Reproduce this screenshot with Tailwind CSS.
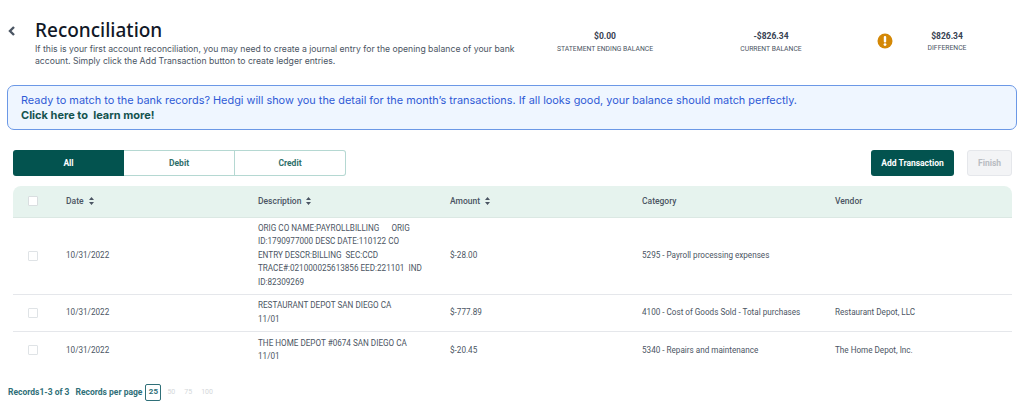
<!DOCTYPE html>
<html lang="en">
<head>
  <meta charset="UTF-8">
  <title>Reconciliation</title>
  <script src="https://cdn.jsdelivr.net/npm/@tailwindcss/browser@4"></script>
</head>
<body class="bg-white h-[404px] w-[1024px] overflow-hidden font-['Roboto',sans-serif] text-[#4b5563]">
  <!-- header -->
  <div class="flex h-[85px] pt-[19px]">
    <div class="w-[35px] pl-[8px] pt-[7px]">
      <svg width="8" height="10" viewBox="0 0 8 10"><path d="M6 1 L2 5 L6 9" fill="none" stroke="#4b5563" stroke-width="2.4"/></svg>
    </div>
    <div class="w-[495px]">
      <h1 class="text-[19px] leading-[22px] font-medium text-[#111827] font-['Noto_Sans',sans-serif]">Reconciliation</h1>
      <p class="mt-[3px] text-[8.66px] leading-[11.5px] text-[#4b5563] font-['Inter',sans-serif]">If this is your first account reconciliation, you may need to create a journal entry for the opening balance of your bank account. Simply click the Add Transaction button to create ledger entries.</p>
    </div>
    <div class="w-[130px] ml-[10px] pt-[11px] text-center">
      <div class="text-[8.5px] leading-[12px] font-bold text-[#374151]">$0.00</div>
      <div class="mt-[1px] text-[6.8px] leading-[12px] text-[#4b5563]">STATEMENT ENDING BALANCE</div>
    </div>
    <div class="w-[120px] ml-[41px] pt-[11px] text-center">
      <div class="text-[8.5px] leading-[12px] font-bold text-[#374151]">-$826.34</div>
      <div class="mt-[1px] text-[6.8px] leading-[12px] text-[#4b5563]">CURRENT BALANCE</div>
    </div>
    <div class="ml-[46px] pt-[14px]">
      <svg width="16" height="16" viewBox="0 0 16 16"><circle cx="8" cy="8" r="7.5" fill="#d48806"/><rect x="6.8" y="3" width="2.4" height="6.4" rx="1" fill="#fff"/><circle cx="8" cy="11.6" r="1.4" fill="#fff"/></svg>
    </div>
    <div class="w-[60px] ml-[24px] pt-[11px] text-center">
      <div class="text-[8.5px] leading-[12px] font-bold text-[#374151]">$826.34</div>
      <div class="text-[6.8px] leading-[12px] text-[#4b5563]">DIFFERENCE</div>
    </div>
  </div>

  <!-- banner -->
  <div class="ml-[7px] w-[1010px] h-[45px] rounded-[7px] border border-[#6b98e6] bg-[#eff6ff] pl-[13px] pt-[7px] font-['Inter',sans-serif] leading-[15px]">
    <div class="text-[10.9px] text-[#2f5bd6]">Ready to match to the bank records? Hedgi will show you the detail for the month’s transactions. If all looks good, your balance should match perfectly.</div>
    <div class="text-[11px] font-bold text-[#14534f]">Click here to&nbsp; learn more!</div>
  </div>

  <!-- tabs and actions -->
  <div class="flex items-center ml-[13px] w-[999px] mt-[20px] h-[26px] text-[8.5px] font-bold">
    <div class="flex w-[333px] h-[26px] rounded-[3px]">
      <div class="w-[111px] flex items-center justify-center rounded-l-[3px] bg-[#03534f] text-white">All</div>
      <div class="w-[111px] flex items-center justify-center border-y border-r border-[#b5d8d2] text-[#2f6f6a]">Debit</div>
      <div class="w-[111px] flex items-center justify-center border-y border-r rounded-r-[3px] border-[#b5d8d2] text-[#2f6f6a]">Credit</div>
    </div>
    <div class="ml-auto w-[83px] h-[26px] rounded-[3px] bg-[#03534f] text-white flex items-center justify-center">Add Transaction</div>
    <div class="ml-[13px] w-[45px] h-[26px] rounded-[3px] bg-[#f3f4f6] border border-[#e5e7eb] text-[#b8bcc2] flex items-center justify-center">Finish</div>
  </div>

  <!-- table -->
  <table class="ml-[13px] mt-[10px] w-[999px] table-fixed text-[8.15px] text-[#4b5563]">
    <colgroup>
      <col class="w-[53px]"><col class="w-[192px]"><col class="w-[192px]"><col class="w-[192px]"><col class="w-[193px]"><col>
    </colgroup>
    <thead>
      <tr class="h-[31px] bg-[#e6f3ee] border-b border-[#dbe8e3] text-left text-[8.5px] text-[#4b5563]">
        <th class="rounded-tl-[8px] pl-[15px] font-normal"><span class="block w-[10px] h-[10px] bg-white border border-[#d9dee0] rounded-[1px]"></span></th>
        <th class="font-medium"><span class="flex items-center gap-[5px]">Date <svg width="5" height="8" viewBox="0 0 5 8"><path d="M2.5 0 L5 3 H0Z M2.5 8 L5 5 H0Z" fill="#4b5563"/></svg></span></th>
        <th class="font-medium"><span class="flex items-center gap-[5px]">Description <svg width="5" height="8" viewBox="0 0 5 8"><path d="M2.5 0 L5 3 H0Z M2.5 8 L5 5 H0Z" fill="#4b5563"/></svg></span></th>
        <th class="font-medium"><span class="flex items-center gap-[5px]">Amount <svg width="5" height="8" viewBox="0 0 5 8"><path d="M2.5 0 L5 3 H0Z M2.5 8 L5 5 H0Z" fill="#4b5563"/></svg></span></th>
        <th class="font-medium">Category</th>
        <th class="rounded-tr-[8px] font-medium">Vendor</th>
      </tr>
    </thead>
    <tbody class="leading-[13.4px]">
      <tr class="h-[77px] border-b border-[#e5e7eb]">
        <td class="pl-[15px]"><span class="block w-[10px] h-[10px] border border-[#dfe3e6] rounded-[1px]"></span></td>
        <td>10/31/2022</td>
        <td class="pr-[10px]">ORIG CO NAME:PAYROLLBILLING &nbsp; &nbsp; &nbsp;ORIG<br>ID:1790977000 DESC DATE:110122 CO<br>ENTRY DESCR:BILLING &nbsp;SEC:CCD<br>TRACE#:021000025613856 EED:221101 &nbsp;IND<br>ID:82309269</td>
        <td>$-28.00</td>
        <td>5295 - Payroll processing expenses</td>
        <td></td>
      </tr>
      <tr class="h-[37px] border-b border-[#e5e7eb]">
        <td class="pl-[15px]"><span class="block w-[10px] h-[10px] border border-[#dfe3e6] rounded-[1px]"></span></td>
        <td>10/31/2022</td>
        <td class="pr-[10px]">RESTAURANT DEPOT SAN DIEGO CA<br>11/01</td>
        <td>$-777.89</td>
        <td>4100 - Cost of Goods Sold - Total purchases</td>
        <td>Restaurant Depot, LLC</td>
      </tr>
      <tr class="h-[38px]">
        <td class="pl-[15px]"><span class="block w-[10px] h-[10px] border border-[#dfe3e6] rounded-[1px]"></span></td>
        <td>10/31/2022</td>
        <td class="pr-[10px]">THE HOME DEPOT #0674 SAN DIEGO CA<br>11/01</td>
        <td>$-20.45</td>
        <td>5340 - Repairs and maintenance</td>
        <td>The Home Depot, Inc.</td>
      </tr>
    </tbody>
  </table>

  <!-- pagination -->
  <div class="flex items-center ml-[8px] mt-[14px] h-[18px] text-[8.5px] font-bold text-[#2f6f78]">
    <span>Records1-3 of 3</span>
    <span class="ml-[6px]">Records per page</span>
    <span class="ml-[3px] w-[16px] h-[17px] flex items-center justify-center border border-[#2f6f78] rounded-[2px] text-[8px]">25</span>
    <span class="ml-[6px] text-[7px] font-normal text-[#d4d7da]">50</span>
    <span class="ml-[9px] text-[7px] font-normal text-[#d4d7da]">75</span>
    <span class="ml-[9px] text-[7px] font-normal text-[#d4d7da]">100</span>
  </div>
</body>
</html>
